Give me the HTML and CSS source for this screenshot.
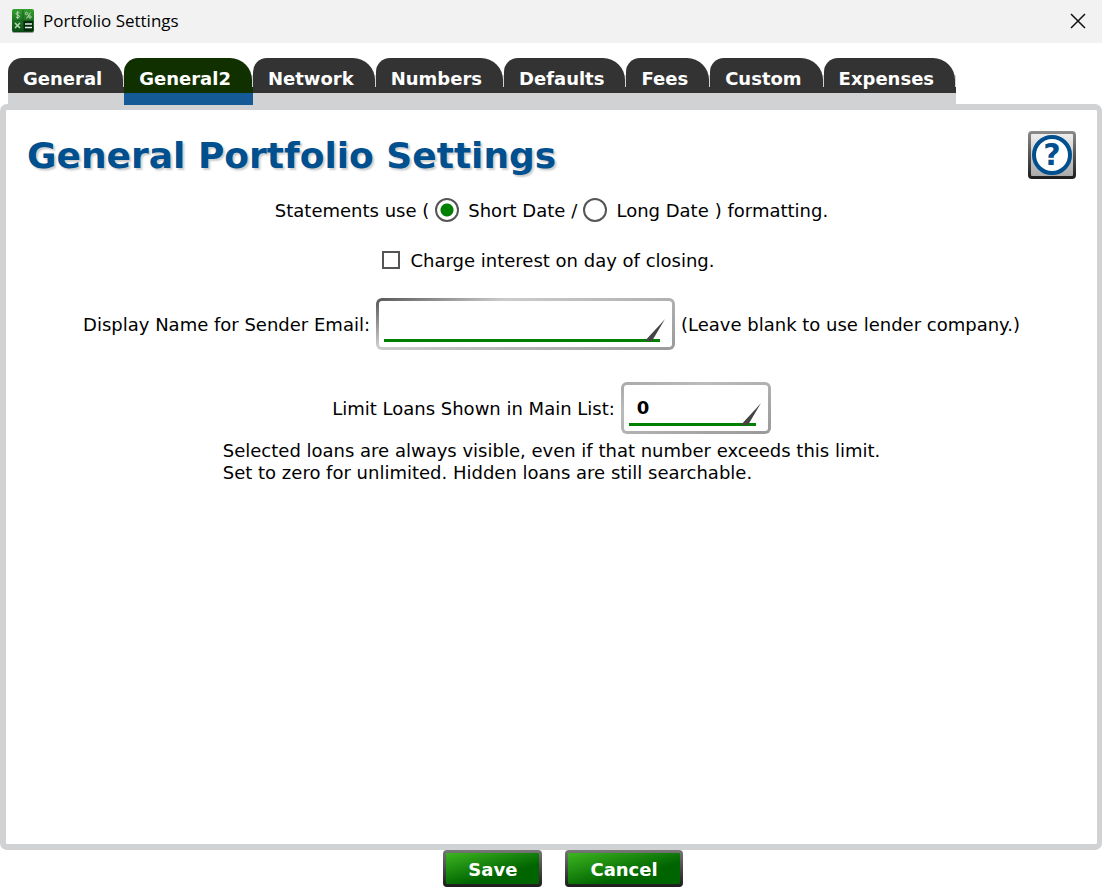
FILE: index.html
```html
<!DOCTYPE html>
<html lang="en">
<head>
    <meta charset="UTF-8">
    <meta name="viewport" content="width=device-width, initial-scale=1.0">
    <title>Portfolio Settings</title>
    <link rel="stylesheet" href="styles.css">
</head>
<body>
    <header class="titlebar">
        <svg class="app-icon" viewBox="0 0 24 24" aria-hidden="true">
            <defs>
                <linearGradient id="iconGreen" x1="0" y1="0" x2="0" y2="1">
                    <stop offset="0" stop-color="#35a02f"/>
                    <stop offset="1" stop-color="#0a4a14"/>
                </linearGradient>
            </defs>
            <rect x="1" y="1" width="22" height="23" rx="2" fill="#999"/>
            <rect x="1" y="0" width="22" height="23" rx="2" fill="url(#iconGreen)"/>
            <rect x="12" y="12" width="10" height="10" fill="#032b0b"/>
            <path d="M12 1v21M2 11.500h20" stroke="#1c5f22" fill="none"/>
            <path d="M8.500 4c-1-1-3.500-.7-3.500.8s3.500.9 3.500 2.500-2.500 1.700-3.500.7M6.700 2v8M19.500 3.500l-4 6" stroke="#b9d8b7" fill="none"/>
            <circle cx="15.500" cy="4.500" r="1.200" stroke="#b9d8b7" fill="none"/>
            <circle cx="19" cy="8" r="1.200" stroke="#b9d8b7" fill="none"/>
            <path d="M4 14l5 5M9 14l-5 5" stroke="#b9d8b7" stroke-width="1.500" fill="none"/>
            <path d="M14 15h7M14 18.500h7" stroke="#e6eee6" stroke-width="1.500" fill="none"/>
        </svg>
        <span class="title">Portfolio Settings</span>
        <button class="close-btn" type="button" aria-label="Close">
            <svg viewBox="0 0 16 16"><path d="M1 1l14 14M15 1L1 15"/></svg>
        </button>
    </header>

    <nav>
        <ul class="tabs">
            <li><button type="button">General</button></li>
            <li class="active"><button type="button">General2</button></li>
            <li><button type="button">Network</button></li>
            <li><button type="button">Numbers</button></li>
            <li><button type="button">Defaults</button></li>
            <li><button type="button">Fees</button></li>
            <li><button type="button">Custom</button></li>
            <li><button type="button">Expenses</button></li>
        </ul>
    </nav>

    <form class="settings" id="settings">
        <div class="heading">
            <h1>General Portfolio Settings</h1>
            <button class="help-btn" type="button" aria-label="Help"><span>?</span></button>
        </div>

        <div class="row date-row">
            <span>Statements use (</span>
            <input type="radio" name="dateFormat" id="shortDate" checked>
            <label for="shortDate">Short Date</label>
            <span>/</span>
            <input type="radio" name="dateFormat" id="longDate">
            <label for="longDate">Long Date</label>
            <span>) formatting.</span>
        </div>

        <div class="row check-row">
            <input type="checkbox" id="closingInterest">
            <label for="closingInterest">Charge interest on day of closing.</label>
        </div>

        <div class="row field-row">
            <label for="senderName">Display Name for Sender Email:</label>
            <div class="field field-wide">
                <input type="text" id="senderName">
                <svg class="quill" viewBox="0 0 20 22"><path d="M20 0L7 22H0C7 14 13 8 20 0z"/></svg>
            </div>
            <span>(Leave blank to use lender company.)</span>
        </div>

        <div class="row field-row">
            <label for="loanLimit">Limit Loans Shown in Main List:</label>
            <div class="field field-short">
                <input type="text" id="loanLimit" value="0">
                <svg class="quill" viewBox="0 0 20 22"><path d="M20 0L7 22H0C7 14 13 8 20 0z"/></svg>
            </div>
        </div>

        <p class="note">
            Selected loans are always visible, even if that number exceeds this limit.<br>
            Set to zero for unlimited. Hidden loans are still searchable.
        </p>
    </form>

    <footer class="actions">
        <button type="submit" form="settings">Save</button>
        <button type="button">Cancel</button>
    </footer>
</body>
</html>
```
FILE: styles.css
```css
* {
    box-sizing: border-box;
}
body {
    display: flex;
    flex-direction: column;
    min-height: 100vh;
    margin: 0;
    background: #fff;
    color: #000;
    font-family: Verdana, "DejaVu Sans", sans-serif;
    font-size: 18px;
    line-height: 22px;
}
button, input {
    margin: 0;
    font-family: inherit;
    font-size: inherit;
}
button {
    cursor: pointer;
}

/* title bar */
.titlebar {
    display: flex;
    align-items: center;
    height: 43px;
    padding: 0 8px 2px 11px;
    background: #f2f2f2;
}
.app-icon {
    width: 24px;
    height: 24px;
    margin-right: 8px;
}
.title {
    flex: 1;
    font-family: "Segoe UI", "Open Sans", sans-serif;
    font-size: 17px;
}
.close-btn {
    display: flex;
    padding: 8px;
    border: none;
    background: none;
}
.close-btn svg {
    width: 16px;
    height: 16px;
    stroke: #111;
    stroke-width: 1.5;
}

/* tabs */
.tabs {
    display: flex;
    width: fit-content;
    margin: 15px 8px 0;
    padding: 0 0 11px;
    list-style: none;
    background: linear-gradient(#d1d2d4, #d1d2d4) bottom / 100% 11px no-repeat;
}
.tabs li {
    padding-right: 1px;
    border-bottom: 6px solid #333;
    background: linear-gradient(#d1d2d4, #d1d2d4) right bottom / 1px 12px no-repeat;
    background-origin: padding-box;
}
.tabs button {
    display: block;
    height: 29px;
    padding: 12px 21px 0 15px;
    border: none;
    border-radius: 14px 22px 0 0;
    background: #333;
    color: #fff;
    font-weight: bold;
    line-height: 17px;
}
.tabs .active {
    position: relative;
    border-color: #103000;
    box-shadow: 0 12px 0 #145a96;
}
.tabs .active button {
    background: #103000;
}

/* panel */
.settings {
    flex: 1;
    padding: 21px;
    border: 6px solid #d1d2d4;
    border-right-width: 5px;
    border-radius: 7px;
}
.heading {
    display: flex;
    justify-content: space-between;
    align-items: center;
}
h1 {
    margin: 0;
    padding-top: 2px;
    color: #00508f;
    font-size: 36px;
    line-height: 46px;
    text-shadow: 2px 2px 2px #ccc;
}
.help-btn {
    width: 48px;
    height: 48px;
    padding: 1px;
    border: 3px solid transparent;
    border-radius: 4px;
    background: linear-gradient(#eee, #aaa) padding-box, linear-gradient(#8c8c8c, #1c1c1c) border-box;
}
.help-btn span {
    display: block;
    height: 40px;
    border: 4px solid #00508f;
    border-radius: 50%;
    background: #fff;
    color: #00508f;
    font-size: 30px;
    font-weight: bold;
    line-height: 32px;
}
.row {
    display: flex;
    justify-content: center;
    align-items: center;
}
.row label, .row span {
    padding-top: 2px;
}

/* radios and tick box */
.date-row {
    margin-top: 19px;
    gap: 6px;
}
.date-row label {
    margin-left: 3px;
}
input[type="radio"], input[type="checkbox"] {
    flex: none;
    appearance: none;
    border: 2px solid #555;
    background: #fff;
}
input[type="radio"] {
    width: 24px;
    height: 24px;
    border-radius: 50%;
}
input[type="radio"]:checked {
    background: radial-gradient(circle, #008000 6px, #fff 7px);
}
.check-row {
    margin-top: 26px;
    padding-right: 7px;
    gap: 11px;
}
input[type="checkbox"] {
    width: 18px;
    height: 18px;
}
input[type="checkbox"]:checked {
    background: #008000;
}

/* text fields */
.field-row {
    gap: 6px;
    margin-top: 26px;
}
.field-row + .field-row {
    margin-top: 32px;
}
.field {
    position: relative;
    height: 52px;
    padding: 5px 12px 5px 5px;
    border: 3px solid transparent;
    border-radius: 6px;
}
.field-wide {
    width: 299px;
    background: linear-gradient(#fff, #fff) padding-box, linear-gradient(160deg, #555, #ccc 30%, #999) border-box;
}
.field-short {
    width: 150px;
    background: linear-gradient(#fff, #fff) padding-box, linear-gradient(160deg, #aaa, #bbb 30%, #999) border-box;
}
.field input {
    width: 100%;
    height: 36px;
    padding: 2px 8px 0;
    border: none;
    border-bottom: 3px solid #008000;
    outline: none;
    background: none;
    font-weight: bold;
}
.quill {
    position: absolute;
    right: 7px;
    bottom: 6px;
    width: 20px;
    height: 22px;
    fill: #444;
    pointer-events: none;
}
.note {
    width: fit-content;
    margin: 6px auto 0;
}

/* bottom buttons */
.actions {
    display: flex;
    justify-content: center;
    gap: 23px;
    padding-left: 24px;
}
.actions button {
    height: 37px;
    padding: 2px 22px 0;
    border: 3px solid transparent;
    border-radius: 4px;
    background: linear-gradient(165deg, #3cb521, #006400 65%) padding-box, linear-gradient(#777, #1c1c1c) border-box;
    color: #fff;
    font-weight: bold;
}
```
